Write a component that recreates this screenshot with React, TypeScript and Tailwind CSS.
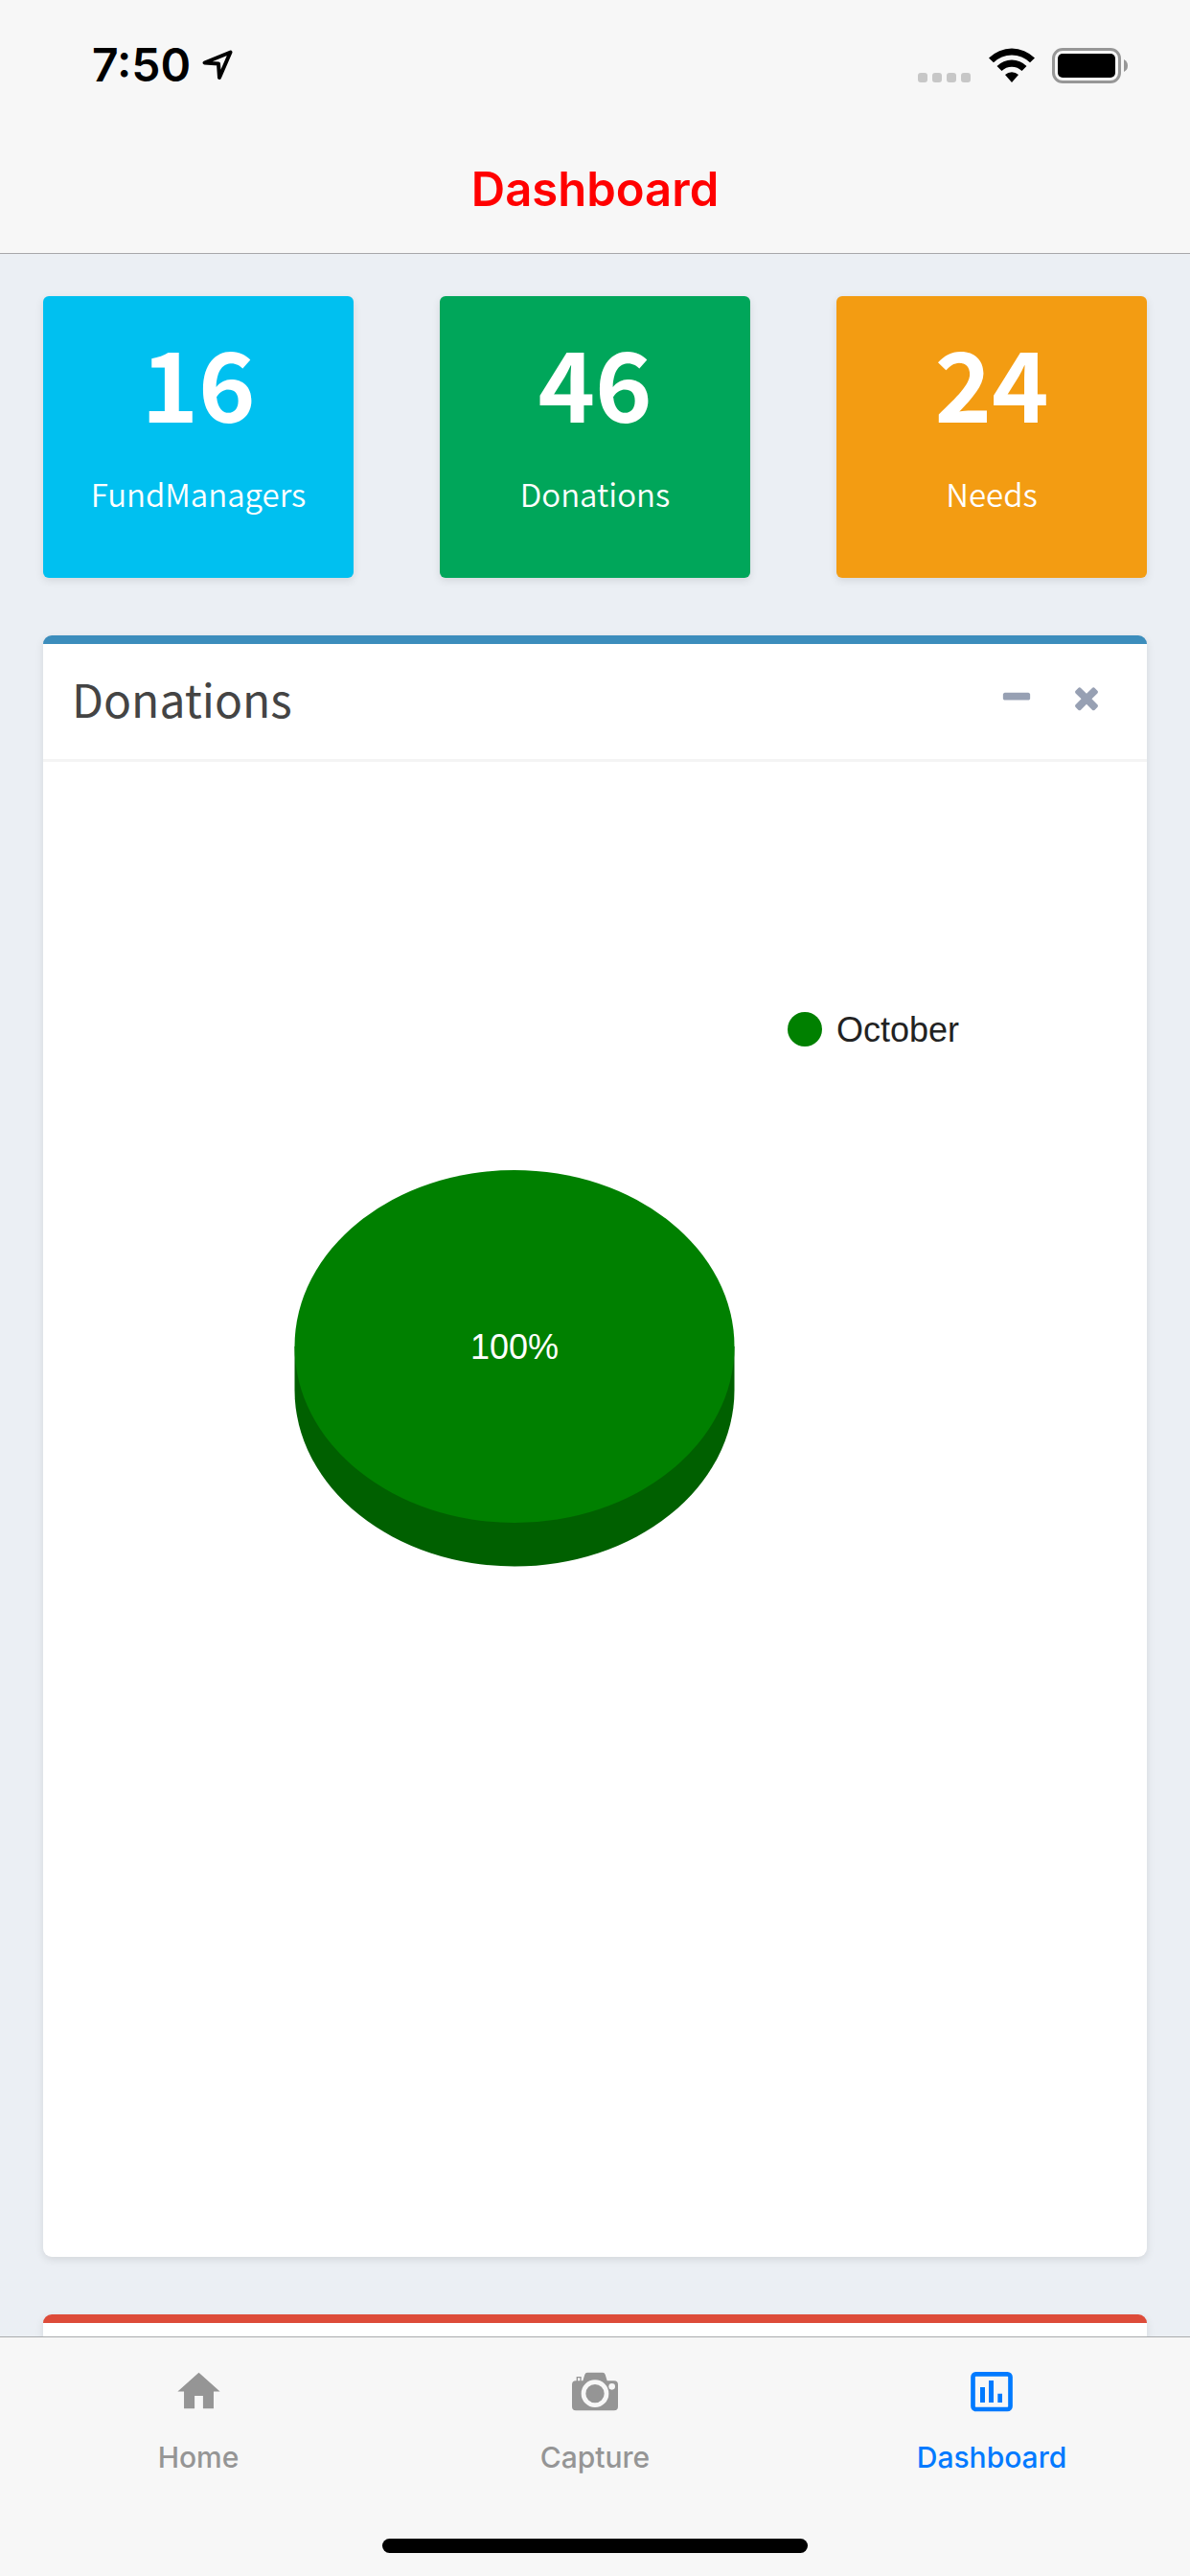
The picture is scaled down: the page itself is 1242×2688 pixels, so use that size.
import { useState } from 'react';

interface Stat {
  label: string;
  value: number;
  color: string;
}

const stats: Stat[] = [
  { label: 'FundManagers', value: 16, color: 'bg-[#00c0f0]' },
  { label: 'Donations', value: 46, color: 'bg-[#00a65a]' },
  { label: 'Needs', value: 24, color: 'bg-[#f39c12]' },
];

const SOURCE = "font-['Noto_Sans_CJK_JP',sans-serif]";

function StatusBar() {
  return (
    <div className="flex items-center justify-between h-[136px] pl-24 pr-16">
      <div className="flex items-center gap-3">
        <span className="text-[48px] leading-[60px] font-semibold">7:50</span>
        <svg className="w-8 h-8" viewBox="0 0 32 32" fill="none" stroke="currentColor" strokeWidth="4" strokeLinejoin="round">
          <path d="M2.5 13.5 29.5 2.5 18 29 17 14.5Z" />
        </svg>
      </div>
      <div className="flex items-center gap-[18px]">
        <svg className="w-[56px] h-[37px]" viewBox="0 0 56 37" fill="#c7c7c7">
          <rect x="0" y="26" width="10" height="10" rx="3" />
          <rect x="15" y="26" width="10" height="10" rx="3" />
          <rect x="30" y="26" width="10" height="10" rx="3" />
          <rect x="45" y="26" width="10" height="10" rx="3" />
        </svg>
        <svg className="w-[48px] h-[37px]" viewBox="0 0 48 37">
          <path d="M0 10.500A34 34 0 0 1 48 10.500L43 15.300A27 27 0 0 0 5 15.300Z" />
          <path d="M8.500 19A22 22 0 0 1 39.500 19L34.500 24A15 15 0 0 0 13.500 24Z" />
          <path d="M17 28A10.500 10.500 0 0 1 31 28L24 36Z" />
        </svg>
        <svg className="w-[80px] h-[37px]" viewBox="0 0 80 37">
          <rect x="1.500" y="1.500" width="69" height="34" rx="9.500" fill="none" stroke="#979797" strokeWidth="3" />
          <rect x="6" y="6" width="60" height="25" rx="5" />
          <path d="M75 12Q79 14 79 18.500T75 25Z" fill="#979797" />
        </svg>
      </div>
    </div>
  );
}

function StatBox({ stat }: { stat: Stat }) {
  return (
    <div className={`${stat.color} ${SOURCE} h-[294px] pt-6 rounded-md shadow-[0_3px_8px_rgba(0,0,0,0.1)] text-white text-center`}>
      <h3 className="text-[101px] leading-[128px] font-bold">{stat.value}</h3>
      <p className="text-[33px] leading-[48px] font-[350] mt-[30px]">{stat.label}</p>
    </div>
  );
}

function DonationsChart() {
  return (
    <svg
      className="block w-full h-auto font-['Liberation_Sans',Arial,sans-serif] text-[36px]"
      viewBox="0 0 1152 1560"
      role="img"
      aria-label="Donations by month"
    >
      <circle cx="795" cy="279" r="18" fill="#008000" />
      <text x="828" y="292" fill="#222222">October</text>
      <path d="M262.500 610V655.500A229.500 184 0 0 0 721.500 655.500V610Z" fill="#006000" />
      <ellipse cx="492" cy="610" rx="229.500" ry="184" fill="#008000" />
      <text x="492" y="623" fill="#ffffff" textAnchor="middle">100%</text>
    </svg>
  );
}

function DonationsBox({ onClose }: { onClose: () => void }) {
  const [collapsed, setCollapsed] = useState(false);

  return (
    <section className="bg-white border-t-[9px] border-[#3c8dbc] rounded-[9px] shadow-[0_3px_8px_rgba(0,0,0,0.1)]">
      <div className="flex items-center justify-between h-[123px] pl-[30px] pr-[45px] pb-2 border-b-[3px] border-[#f4f4f4]">
        <h3 className={`${SOURCE} text-[48px] leading-[60px] text-[#444444]`}>Donations</h3>
        <div className="flex gap-[37px] text-[#97a0b3]">
          <button type="button" aria-label="Collapse" onClick={() => setCollapsed(!collapsed)}>
            <svg className="w-9 h-9" viewBox="0 0 1792 1792" fill="currentColor">
              <path d="M1600 736v192q0 40-28 68t-68 28h-1216q-40 0-68-28t-28-68v-192q0-40 28-68t68-28h1216q40 0 68 28t28 68z" />
            </svg>
          </button>
          <button type="button" aria-label="Remove" onClick={onClose}>
            <svg className="w-9 h-9" viewBox="0 0 1792 1792" fill="currentColor">
              <path d="M1490 1322q0 40-28 68l-136 136q-28 28-68 28t-68-28l-294-294-294 294q-28 28-68 28t-68-28l-136-136q-28-28-28-68t28-68l294-294-294-294q-28-28-28-68t28-68l136-136q28-28 68-28t68 28l294 294 294-294q28-28 68-28t68 28l136 136q28 28 28 68t-28 68l-294 294 294 294q28 28 28 68z" />
            </svg>
          </button>
        </div>
      </div>
      {!collapsed && <DonationsChart />}
    </section>
  );
}

function TabBar() {
  return (
    <footer className="shrink-0 bg-[#f7f7f7] border-t border-[#a9abad]">
      <nav className="grid grid-cols-3 h-[210px] pt-[30px] text-[30px] leading-[36px] font-medium text-[#959595]">
        <a href="#home" className="flex flex-col items-center gap-6">
          <svg className="w-[53px] h-[53px]" viewBox="0 0 24 24" fill="currentColor">
            <path d="M10 20v-6h4v6h5v-8h3L12 3 2 12h3v8z" />
          </svg>
          Home
        </a>
        <a href="#capture" className="flex flex-col items-center gap-6">
          <svg className="w-[48px] h-[53px]" viewBox="528 208 144 159" fill="currentColor">
            <path d="M540 254h22l6-20q2-6 8-6h48q6 0 8 6l6 20h22q12 0 12 12v69q0 12-12 12H540q-12 0-12-12V266q0-12 12-12z" />
            <path d="M544 256v-13h11v13" fill="none" stroke="currentColor" strokeWidth="4" />
            <circle cx="600" cy="294" r="36" fill="none" stroke="#f7f7f7" strokeWidth="14" />
            <circle cx="653" cy="272" r="10" fill="#f7f7f7" />
          </svg>
          Capture
        </a>
        <a href="#dashboard" aria-current="page" className="flex flex-col items-center gap-6 text-[#007aff]">
          <svg className="w-[44px] h-[53px]" viewBox="517 448 132 159" fill="currentColor">
            <rect x="524.500" y="473" width="117" height="110" rx="9" fill="none" stroke="currentColor" strokeWidth="14" />
            <path d="M547 514h15v48h-15zM574 493h15v69h-15zM602 534h14v28h-14z" />
          </svg>
          Dashboard
        </a>
      </nav>
      <div className="w-[444px] h-[15px] mx-auto mb-6 rounded-full bg-black" />
    </footer>
  );
}

export default function App() {
  const [showDonations, setShowDonations] = useState(true);

  return (
    <div className="h-screen flex flex-col overflow-hidden bg-[#ebeff4] text-black font-['Inter',sans-serif]">
      {/* Header */}
      <header className="shrink-0 h-[265px] bg-[#f7f7f7] border-b border-[#a7a7aa]">
        <StatusBar />
        <h1 className="pt-8 text-center text-[49px] leading-[60px] font-semibold text-[#ff0000]">Dashboard</h1>
      </header>

      {/* Content */}
      <main className="flex-1 min-h-0 overflow-hidden px-[45px] pt-11">
        <div className="grid grid-cols-3 gap-[90px] mb-[60px]">
          {stats.map((stat) => (
            <StatBox key={stat.label} stat={stat} />
          ))}
        </div>
        <div className="flex flex-col gap-[60px]">
          {showDonations && <DonationsBox onClose={() => setShowDonations(false)} />}
          <section className="h-96 bg-white border-t-[9px] border-[#dd4b39] rounded-[9px] shadow-[0_3px_8px_rgba(0,0,0,0.1)]" />
        </div>
      </main>

      <TabBar />
    </div>
  );
}
